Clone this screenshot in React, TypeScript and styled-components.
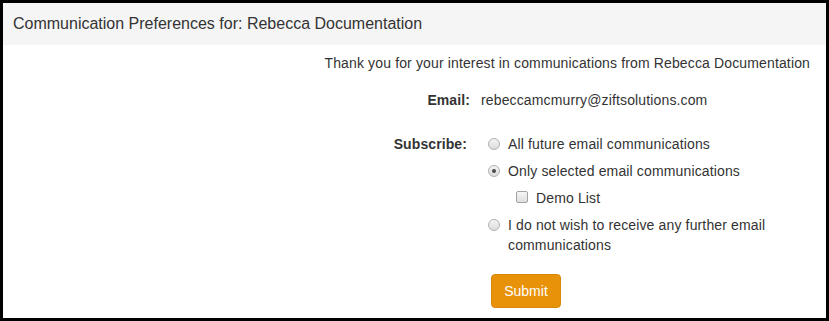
import React from "react";
import styled, { createGlobalStyle } from "styled-components";

const Global = createGlobalStyle`
  html, body { margin: 0; padding: 0; background: #ffffff; }
  body { font-family: "Liberation Sans", Arial, sans-serif; color: #333333; }
  * { box-sizing: border-box; }
`;

const Frame = styled.div`
  width: 829px;
  height: 321px;
  border: 3px solid #000000;
  background: #ffffff;
  overflow: hidden;
  display: flex;
  flex-direction: column;
`;

const Header = styled.div`
  height: 42px;
  flex: none;
  background: #f5f5f5;
  padding-left: 10px;
  font-size: 16px;
  line-height: 42px;
  color: #333333;
`;

const Body = styled.div`
  padding: 8px 16px 11px 0;
  font-size: 14px;
  line-height: 20px;
  letter-spacing: 0.14px;
  display: flex;
  flex-direction: column;
`;

const Intro = styled.p`
  margin: 0 0 17px;
  text-align: right;
`;

const FormGrid = styled.div`
  display: grid;
  grid-template-columns: 467px 1fr;
  column-gap: 11px;
  row-gap: 24px;
`;

const Label = styled.div<{ $inset?: number }>`
  text-align: right;
  font-weight: bold;
  letter-spacing: 0.1px;
  padding-right: ${(p) => p.$inset ?? 0}px;
`;

const Value = styled.div``;

const OptionList = styled.div`
  display: flex;
  flex-direction: column;
  gap: 7px;
  padding-left: 7px;
`;

const Option = styled.label<{ $indent?: number }>`
  display: flex;
  align-items: flex-start;
  gap: 8px;
  padding-left: ${(p) => p.$indent ?? 0}px;
  cursor: pointer;
`;

const Radio = styled.input.attrs({ type: "radio" })`
  appearance: none;
  -webkit-appearance: none;
  flex: none;
  width: 12px;
  height: 12px;
  margin: 4px 0 0;
  border-radius: 50%;
  border: 1px solid #b0b0b0;
  background: linear-gradient(#f4f4f4, #dcdcdc);
  display: grid;
  place-items: center;
  &:checked::after {
    content: "";
    width: 4px;
    height: 4px;
    border-radius: 50%;
    background: #4a4a4a;
  }
`;

const Checkbox = styled.input.attrs({ type: "checkbox" })`
  appearance: none;
  -webkit-appearance: none;
  flex: none;
  width: 12px;
  height: 12px;
  margin: 3px 0 0;
  border-radius: 2px;
  border: 1px solid #a3a3a3;
  background: linear-gradient(#f6f6f6, #dedede);
`;

const OptionText = styled.span`
  flex: 1;
`;

const SubmitRow = styled.div`
  grid-column: 2;
  margin-top: -5px;
  padding-left: 10px;
`;

const SubmitButton = styled.button`
  font-family: "Liberation Sans", Arial, sans-serif;
  font-size: 14px;
  line-height: 20px;
  color: #ffffff;
  background: #e8920a;
  border: 1px solid #d88808;
  border-radius: 4px;
  padding: 6px 12px;
  width: 70px;
  cursor: pointer;
`;

export default function App() {
  return (
    <>
      <Global />
      <Frame>
        <Header>Communication Preferences for: Rebecca Documentation</Header>
        <Body>
          <Intro>Thank you for your interest in communications from Rebecca Documentation</Intro>
          <FormGrid>
            <Label>Email:</Label>
            <Value>rebeccamcmurry@ziftsolutions.com</Value>
            <Label $inset={3}>Subscribe:</Label>
            <OptionList>
              <Option>
                <Radio name="sub" />
                <OptionText>All future email communications</OptionText>
              </Option>
              <Option>
                <Radio name="sub" defaultChecked />
                <OptionText>Only selected email communications</OptionText>
              </Option>
              <Option $indent={28}>
                <Checkbox />
                <OptionText>Demo List</OptionText>
              </Option>
              <Option>
                <Radio name="sub" />
                <OptionText>I do not wish to receive any further email communications</OptionText>
              </Option>
            </OptionList>
            <SubmitRow>
              <SubmitButton type="button">Submit</SubmitButton>
            </SubmitRow>
          </FormGrid>
        </Body>
      </Frame>
    </>
  );
}
